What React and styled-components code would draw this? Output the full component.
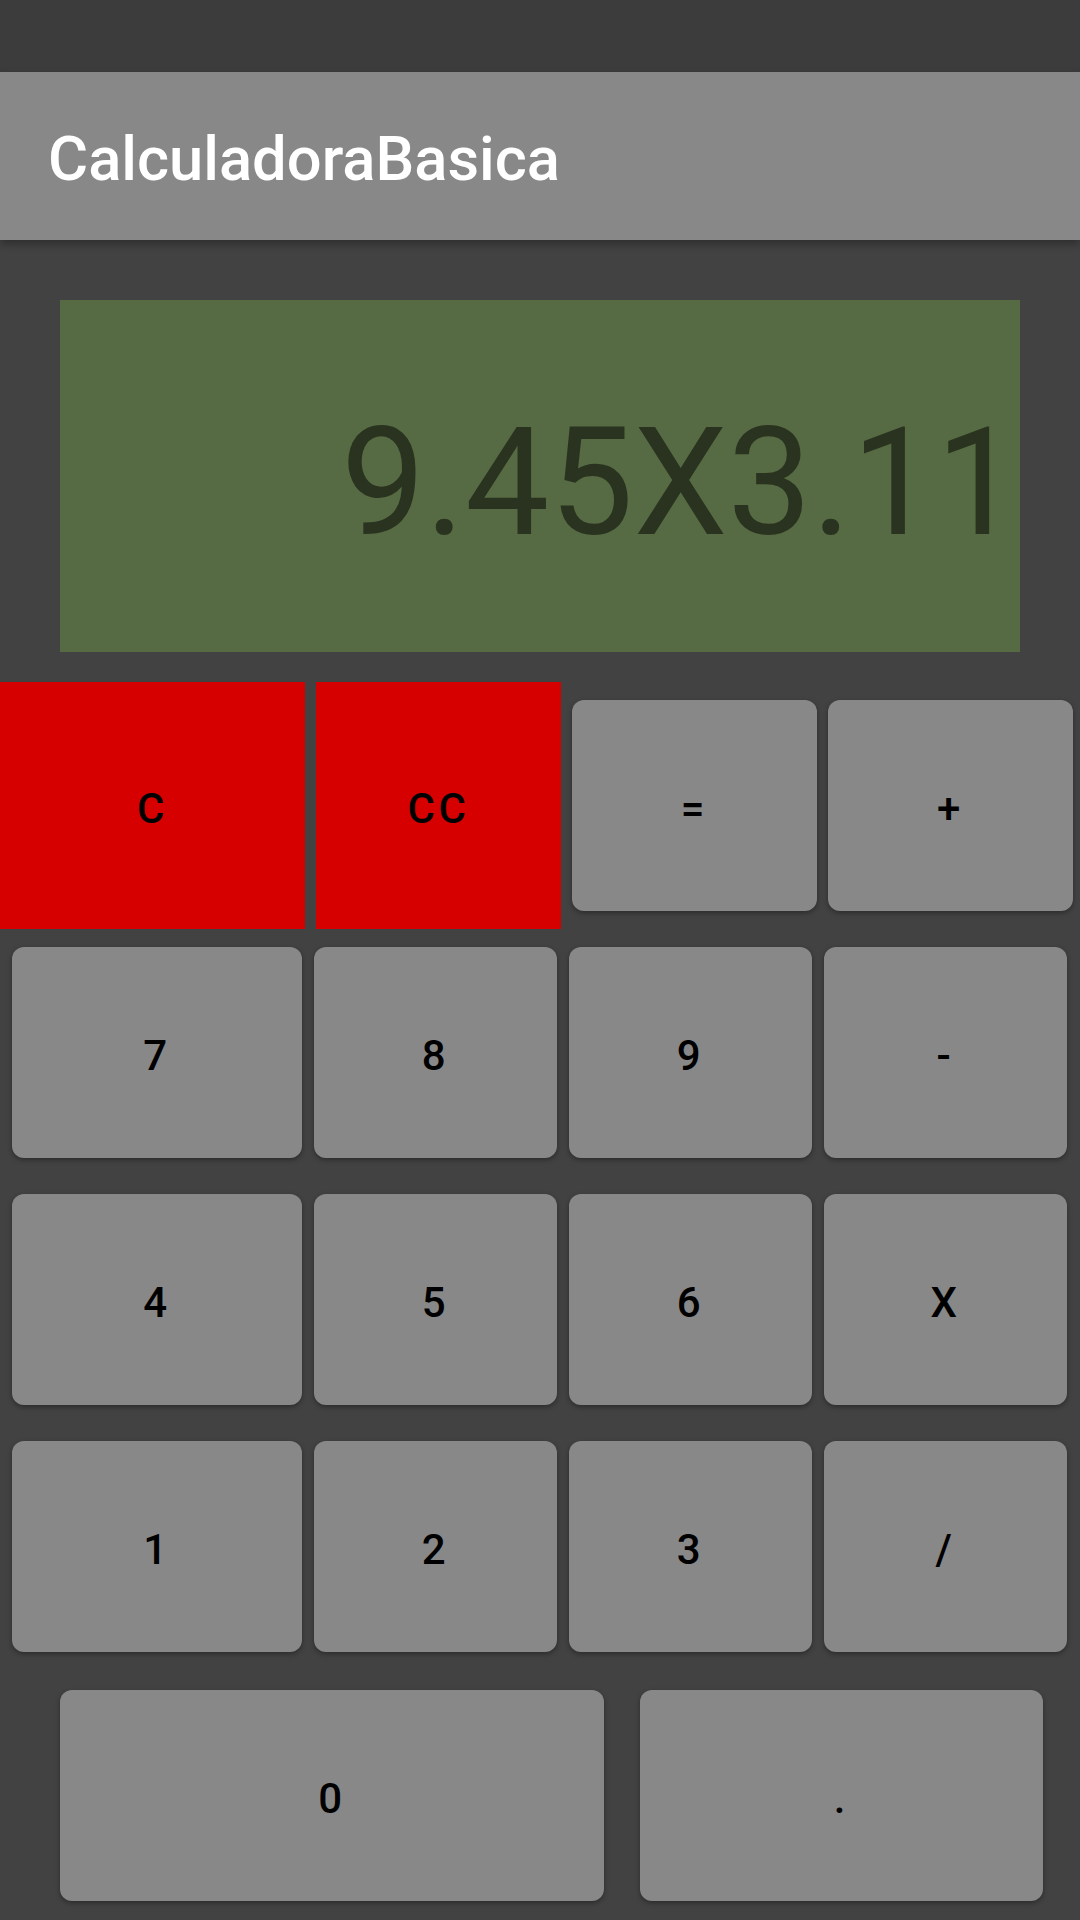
import styled, { createGlobalStyle } from 'styled-components';

const GlobalStyle = createGlobalStyle`
  html, body {
    margin: 0;
    padding: 0;
    background-color: #424242;
    font-family: Roboto, 'Liberation Sans', sans-serif;
  }
`;

const Screen = styled.div`
  width: 1080px;
  height: 1920px;
  overflow: hidden;
  background-color: #424242;
  display: flex;
  flex-direction: column;
`;

const StatusBar = styled.div`
  height: 72px;
  background-color: #3c3c3c;
`;

const AppBar = styled.header`
  height: 168px;
  box-sizing: border-box;
  display: flex;
  align-items: center;
  padding: 5px 0 0 48px;
  background-color: #888888;
  box-shadow: 0 4px 8px rgba(0, 0, 0, 0.3);
  position: relative;
  z-index: 1;
`;

const Title = styled.h1`
  margin: 0;
  color: #ffffff;
  font-size: 61.5px;
  font-weight: 500;
`;

const Display = styled.div`
  margin: 60px 60px 0;
  height: 352px;
  display: flex;
  align-items: center;
  justify-content: flex-end;
  padding-top: 14px;
  box-sizing: border-box;
  background-color: #566b43;
  color: #2a331f;
  font-size: 150px;
  white-space: nowrap;
  overflow: hidden;
`;

const Keypad = styled.div`
  margin-top: 30px;
  display: flex;
  flex-direction: column;
`;

const Row = styled.div`
  height: 247px;
  display: grid;
  grid-template-columns: ${({ $cols }) => $cols};
  column-gap: ${({ $gap }) => $gap};
  padding: ${({ $pad }) => $pad};
`;

const Key = styled.button`
  margin: ${({ $danger }) => ($danger ? '0' : '18px 0')};
  border: none;
  border-radius: ${({ $danger }) => ($danger ? '0' : '12px')};
  background-color: ${({ $danger }) => ($danger ? '#d60000' : '#888888')};
  box-shadow: ${({ $danger }) => ($danger ? 'none' : '0 2px 5px rgba(0, 0, 0, 0.35)')};
  color: #000000;
  font-family: Roboto, 'Liberation Sans', sans-serif;
  font-size: 42px;
  font-weight: 500;
  letter-spacing: 3.7px;
  padding: 5px 0 0;
  cursor: pointer;
`;

const ROWS = [
  {
    cols: '305px 245px 245px 245px',
    gap: '11px',
    pad: '0',
    keys: [
      { label: 'C', danger: true },
      { label: 'CC', danger: true },
      { label: '=' },
      { label: '+' },
    ],
  },
  {
    cols: '290px repeat(3, 243px)',
    gap: '12px',
    pad: '0 12px',
    keys: [{ label: '7' }, { label: '8' }, { label: '9' }, { label: '-' }],
  },
  {
    cols: '290px repeat(3, 243px)',
    gap: '12px',
    pad: '0 12px',
    keys: [{ label: '4' }, { label: '5' }, { label: '6' }, { label: 'X' }],
  },
  {
    cols: '290px repeat(3, 243px)',
    gap: '12px',
    pad: '0 12px',
    keys: [{ label: '1' }, { label: '2' }, { label: '3' }, { label: '/' }],
  },
  {
    cols: '544px 403px',
    gap: '36px',
    pad: '2px 37px 0 60px',
    keys: [{ label: '0' }, { label: '.' }],
  },
];

const App = () => {
  return (
    <Screen>
      <GlobalStyle />
      <StatusBar />
      <AppBar>
        <Title>CalculadoraBasica</Title>
      </AppBar>
      <Display>9.45X3.11</Display>
      <Keypad>
        {ROWS.map((row, i) => (
          <Row key={i} $cols={row.cols} $gap={row.gap} $pad={row.pad}>
            {row.keys.map((k) => (
              <Key key={k.label} $danger={k.danger}>
                {k.label}
              </Key>
            ))}
          </Row>
        ))}
      </Keypad>
    </Screen>
  );
};

export default App;
